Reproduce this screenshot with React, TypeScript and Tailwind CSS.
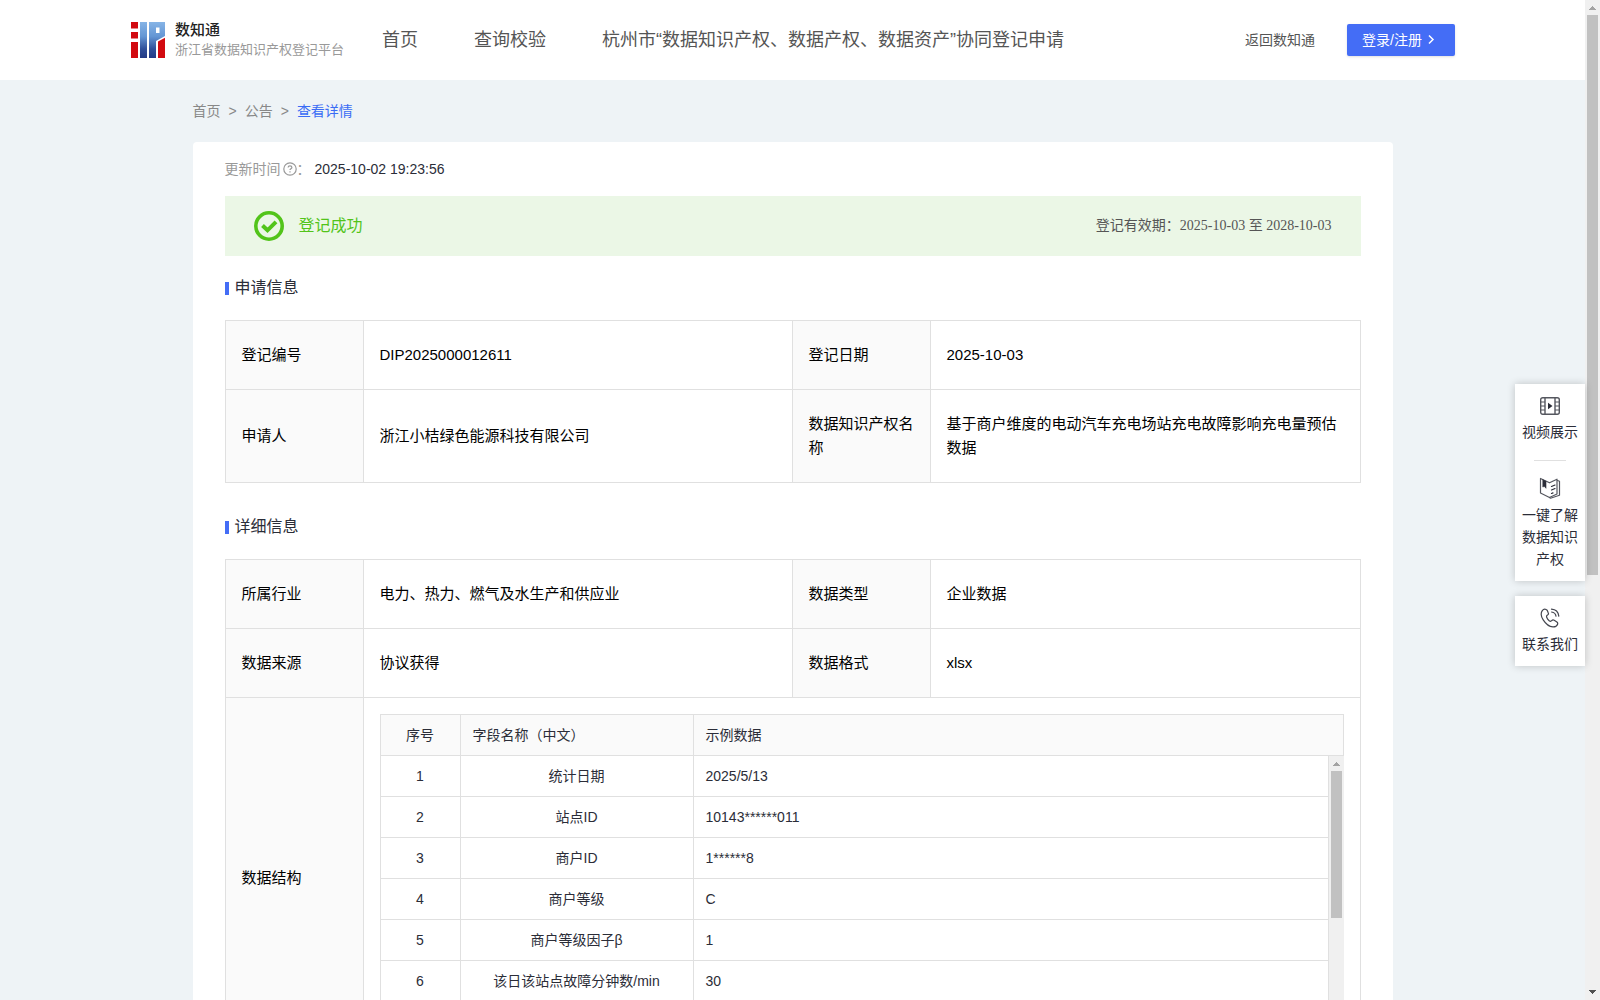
import React from "react";

const fields: [string, string, string][] = [
  ["1", "统计日期", "2025/5/13"],
  ["2", "站点ID", "10143******011"],
  ["3", "商户ID", "1******8"],
  ["4", "商户等级", "C"],
  ["5", "商户等级因子β", "1"],
  ["6", "该日该站点故障分钟数/min", "30"],
];

const labelCell = "border border-[#e0e0e0] bg-[#fafafa] px-4 py-[22px] text-left font-normal";
const valueCell = "border border-[#e0e0e0] px-4 py-[22px]";

function Logo() {
  return (
    <svg viewBox="0 0 34 36" className="h-9 w-[34px] shrink-0" aria-hidden="true">
      <defs>
        <linearGradient id="logoBlue" x1="0" y1="0" x2="0" y2="36" gradientUnits="userSpaceOnUse">
          <stop offset="0" stopColor="#86b4e6" />
          <stop offset="0.4" stopColor="#6496d4" />
          <stop offset="0.75" stopColor="#2f4f9a" />
          <stop offset="1" stopColor="#233a86" />
        </linearGradient>
      </defs>
      <path d="M0 0h7v6.500H0zM0 10h7v6.500H0zM0 20h7v16H0z" fill="#d20a10" />
      <path d="M9 0h7v36H9z" fill="url(#logoBlue)" />
      <path
        d="M18 0h16v14l-9 5v17h-7zM25 5.500v5.500h3.500v-5.500z"
        fillRule="evenodd"
        fill="url(#logoBlue)"
      />
      <path d="M27 19.500L34 15.800V36h-7z" fill="#d20a10" />
    </svg>
  );
}

function Header() {
  return (
    <header className="flex h-20 shrink-0 items-center bg-white pr-[130px] pl-[131px] text-[#555]">
      <Logo />
      <div className="ml-[10px] w-[207px] shrink-0 whitespace-nowrap">
        <div className="text-[15px] leading-5 font-medium text-[#222]">数知通</div>
        <div className="text-[13px] leading-5 text-[#999]">浙江省数据知识产权登记平台</div>
      </div>
      <nav className="flex gap-14 text-lg whitespace-nowrap">
        <a href="#home">首页</a>
        <a href="#query">查询校验</a>
        <a href="#hangzhou">杭州市“数据知识产权、数据产权、数据资产”协同登记申请</a>
      </nav>
      <a href="#back" className="ml-auto text-sm whitespace-nowrap">
        返回数知通
      </a>
      <button
        type="button"
        className="ml-8 flex h-8 w-[108px] shrink-0 items-center rounded-xs bg-[#446df6] pl-[15px] text-sm whitespace-nowrap text-white shadow-sm"
      >
        登录/注册
        <svg viewBox="0 0 12 12" className="ml-[3px] h-3 w-3" fill="none" stroke="currentColor" strokeWidth="1.5" aria-hidden="true">
          <path d="M4 1.500l4 4-4 4" />
        </svg>
      </button>
    </header>
  );
}

function SectionTitle({ children }: { children: React.ReactNode }) {
  return (
    <h2 className="mb-5 flex h-6 items-center gap-[6px] text-base leading-6 text-[#2b2d38]">
      <span className="mt-px h-[13px] w-1 bg-[#446df6]" />
      {children}
    </h2>
  );
}

function Columns() {
  return (
    <colgroup>
      <col className="w-[138px]" />
      <col />
      <col className="w-[138px]" />
      <col className="w-[430px]" />
    </colgroup>
  );
}

function FieldTable() {
  return (
    <div className="text-sm leading-6 text-[#2b2d38]">
      <table className="w-full table-fixed border-collapse">
        <colgroup>
          <col className="w-20" />
          <col className="w-[233px]" />
          <col />
        </colgroup>
        <thead>
          <tr className="h-[41px] bg-[#fafafa]">
            <th className="border border-[#e0e0e0] font-normal">序号</th>
            <th className="border border-[#e0e0e0] px-3 text-left font-normal">字段名称（中文）</th>
            <th className="border border-[#e0e0e0] px-3 text-left font-normal">示例数据</th>
          </tr>
        </thead>
      </table>
      <div className="flex h-[286px] overflow-hidden">
        <div className="flex-1">
          <table className="w-full table-fixed border-separate border-spacing-0">
            <colgroup>
              <col className="w-[81px]" />
              <col className="w-[233px]" />
              <col />
            </colgroup>
            <tbody>
              {fields.map(([no, name, sample]) => (
                <tr key={no} className="h-[41px]">
                  <td className="border-x border-b border-[#e0e0e0] text-center">{no}</td>
                  <td className="border-r border-b border-[#e0e0e0] text-center">{name}</td>
                  <td className="border-r border-b border-[#e0e0e0] px-3">{sample}</td>
                </tr>
              ))}
            </tbody>
          </table>
        </div>
        <div className="flex w-[15px] flex-col items-center bg-[#f0f0f0]" aria-hidden="true">
          <svg viewBox="0 0 15 15" className="h-[15px] w-[15px]" shapeRendering="crispEdges">
            <path d="M7 6h1v1h1v1h1v1h1v1H4V9h1V8h1V7h1z" fill="#a3a3a3" />
          </svg>
          <div className="h-[147px] w-[11px] bg-[#c1c1c1]" />
        </div>
      </div>
    </div>
  );
}

function VideoIcon() {
  return (
    <svg viewBox="0 0 20 20" className="mx-auto h-5 w-5" fill="none" stroke="#55575f" aria-hidden="true">
      <rect x="0.700" y="1.700" width="18.600" height="16.600" rx="2" strokeWidth="1.400" />
      <path d="M5 1.700v16.600M15 1.700v16.600" strokeWidth="1.400" />
      <path d="M0.700 6H5M0.700 10H5M0.700 14H5M15 6h4.300M15 10h4.300M15 14h4.300" strokeWidth="1.200" />
      <path d="M8 6.800l4.500 3.200L8 13.200z" fill="#2b2d38" stroke="none" />
    </svg>
  );
}

function BookIcon() {
  return (
    <svg viewBox="0 0 22 22" className="mx-auto h-[22px] w-[22px]" fill="none" stroke="#55575f" strokeWidth="1.200" strokeLinejoin="round" strokeLinecap="round" aria-hidden="true">
      <path d="M1.500 1.500v14.500l9 4.500 7.500-3.500V2.200l-7.500 3.600z" />
      <path d="M18.500 3.500l2 .7v14l-9 3-1-.7" />
      <path d="M12.500 9.500l3.500-1.500M12.500 13l3.500-1.500M12.500 16.500l1.500-.6" stroke="#2b2d38" />
      <path d="M4 2.800l3 1.500v7L5.500 9.500 4 9.800z" fill="#2b2d38" stroke="#2b2d38" strokeWidth="0.600" />
    </svg>
  );
}

function PhoneIcon() {
  return (
    <svg viewBox="0 0 20 20" className="mx-auto h-5 w-5" fill="none" stroke="#44464f" strokeWidth="1.200" strokeLinecap="round" strokeLinejoin="round" aria-hidden="true">
      <path d="M6.200 1.600C4.800.8 3.300 1.300 2.300 2.700.8 4.800.7 8 3.200 11.900c2.600 4.100 6.400 6.800 9.700 7 2.300.1 4.100-1 4.700-2.700.3-.9 0-1.600-.7-2.100l-2.700-1.800c-.9-.6-1.800-.4-2.500.4-.8.9-1.500.8-2.500 0C8 11.600 7.100 10.300 6.700 9.200c-.4-1-.1-1.600.8-2.100.9-.5 1.200-1.200.8-2.100L7.300 2.500c-.2-.4-.6-.7-1.100-.9z" />
      <path d="M11.500 1.200c3.900.3 6.800 3 7.300 6.900M11.600 4c2.400.3 4 1.800 4.400 4.100" />
    </svg>
  );
}

function SideTools() {
  return (
    <aside className="absolute top-[384px] right-[15px] flex w-[70px] flex-col gap-[15px] text-center text-sm leading-[22px] text-[#2b2d38]">
      <div className="bg-white px-[7px] pt-3 pb-[11px] shadow-[0_0_8px_rgba(0,0,0,0.2)]">
        <a href="#video" className="block">
          <VideoIcon />
          <span className="mt-[5px] block">视频展示</span>
        </a>
        <hr className="mx-auto mt-[17px] mb-4 w-8 border-[#e0e0e0]" />
        <a href="#about" className="block">
          <BookIcon />
          <span className="mt-[5px] block">一键了解数据知识产权</span>
        </a>
      </div>
      <a href="#contact" className="block bg-white px-[7px] pt-3 pb-[11px] shadow-[0_0_8px_rgba(0,0,0,0.2)]">
        <PhoneIcon />
        <span className="mt-[5px] block">联系我们</span>
      </a>
    </aside>
  );
}

function PageScrollbar() {
  return (
    <div className="flex w-[15px] shrink-0 flex-col items-center bg-[#f0f0f0]" aria-hidden="true">
      <svg viewBox="0 0 15 15" className="h-[15px] w-[15px] shrink-0" shapeRendering="crispEdges">
        <path d="M7 6h1v1h1v1h1v1h1v1H4V9h1V8h1V7h1z" fill="#a3a3a3" />
      </svg>
      <div className="w-full flex-1 px-[2px]">
        <div className="h-[57.7%] bg-[#c1c1c1]" />
      </div>
      <svg viewBox="0 0 15 15" className="h-[15px] w-[15px] shrink-0" shapeRendering="crispEdges">
        <path d="M4 5h7v1h-1v1H9v1H8v1H7V8H6V7H5V6H4z" fill="#505050" />
      </svg>
    </div>
  );
}

export default function App() {
  return (
    <div className="relative flex h-screen bg-[#eef3f6] font-['Liberation_Sans','Noto_Sans_CJK_SC',sans-serif]">
      <div className="min-w-0 flex-1 overflow-x-hidden overflow-y-auto [scrollbar-width:none]">
        <Header />
        <main className="mx-auto max-w-[1200px]">
          <nav className="flex h-[62px] items-center gap-2 text-sm text-[#888]" aria-label="breadcrumb">
            <a href="#home">首页</a>
            <span>&gt;</span>
            <a href="#notice">公告</a>
            <span>&gt;</span>
            <a href="#detail" className="text-[#3a6cf5]">
              查看详情
            </a>
          </nav>
          <article className="rounded bg-white px-8 pt-4 pb-8">
            <div className="flex h-[22px] items-center text-sm text-[#999]">
              更新时间
              <svg viewBox="0 0 14 14" className="ml-[2px] h-[14px] w-[14px]" fill="none" stroke="currentColor" strokeWidth="1.200" aria-hidden="true">
                <circle cx="7" cy="7" r="6.200" />
                <path d="M5.100 5.600c0-1 .8-1.700 1.900-1.700s1.900.7 1.900 1.600c0 1.300-1.900 1.300-1.900 2.600M7 9.300v1.200" />
              </svg>
              <span className="w-4">：</span>
              <time className="ml-[2px] text-[#2b2d38]">2025-10-02 19:23:56</time>
            </div>
            <div className="mt-4 flex h-[60px] items-center bg-[#ebf7e6] pr-[29px] pl-[29px]">
              <svg viewBox="0 0 30 30" className="h-[30px] w-[30px]" fill="none" stroke="#52c41a" aria-hidden="true">
                <circle cx="15" cy="15" r="13.200" strokeWidth="3.600" />
                <path d="M8.500 14.500l5 4.800 8.500-8.500" strokeWidth="4" />
              </svg>
              <span className="ml-[15px] text-base text-[#52c41a]">登记成功</span>
              <p className="ml-auto text-sm text-[#555] font-['Liberation_Serif','Noto_Sans_CJK_SC',serif]">
                登记有效期：2025-10-03 至 2028-10-03
              </p>
            </div>

            <div className="mt-5">
              <SectionTitle>申请信息</SectionTitle>
              <table className="w-full table-fixed border-collapse text-[15px] leading-6 text-black">
                <Columns />
                <tbody>
                  <tr>
                    <th scope="row" className={labelCell}>登记编号</th>
                    <td className={valueCell}>DIP2025000012611</td>
                    <th scope="row" className={labelCell}>登记日期</th>
                    <td className={valueCell}>2025-10-03</td>
                  </tr>
                  <tr>
                    <th scope="row" className={labelCell}>申请人</th>
                    <td className={valueCell}>浙江小桔绿色能源科技有限公司</td>
                    <th scope="row" className={labelCell}>数据知识产权名称</th>
                    <td className={valueCell}>基于商户维度的电动汽车充电场站充电故障影响充电量预估数据</td>
                  </tr>
                </tbody>
              </table>
            </div>

            <div className="mt-8">
              <SectionTitle>详细信息</SectionTitle>
              <table className="w-full table-fixed border-collapse text-[15px] leading-6 text-black">
                <Columns />
                <tbody>
                  <tr>
                    <th scope="row" className={labelCell}>所属行业</th>
                    <td className={valueCell}>电力、热力、燃气及水生产和供应业</td>
                    <th scope="row" className={labelCell}>数据类型</th>
                    <td className={valueCell}>企业数据</td>
                  </tr>
                  <tr>
                    <th scope="row" className={labelCell}>数据来源</th>
                    <td className={valueCell}>协议获得</td>
                    <th scope="row" className={labelCell}>数据格式</th>
                    <td className={valueCell}>xlsx</td>
                  </tr>
                  <tr>
                    <th scope="row" className={labelCell}>数据结构</th>
                    <td colSpan={3} className="border border-[#e0e0e0] p-4">
                      <FieldTable />
                    </td>
                  </tr>
                </tbody>
              </table>
            </div>
          </article>
        </main>
      </div>
      <SideTools />
      <PageScrollbar />
    </div>
  );
}
